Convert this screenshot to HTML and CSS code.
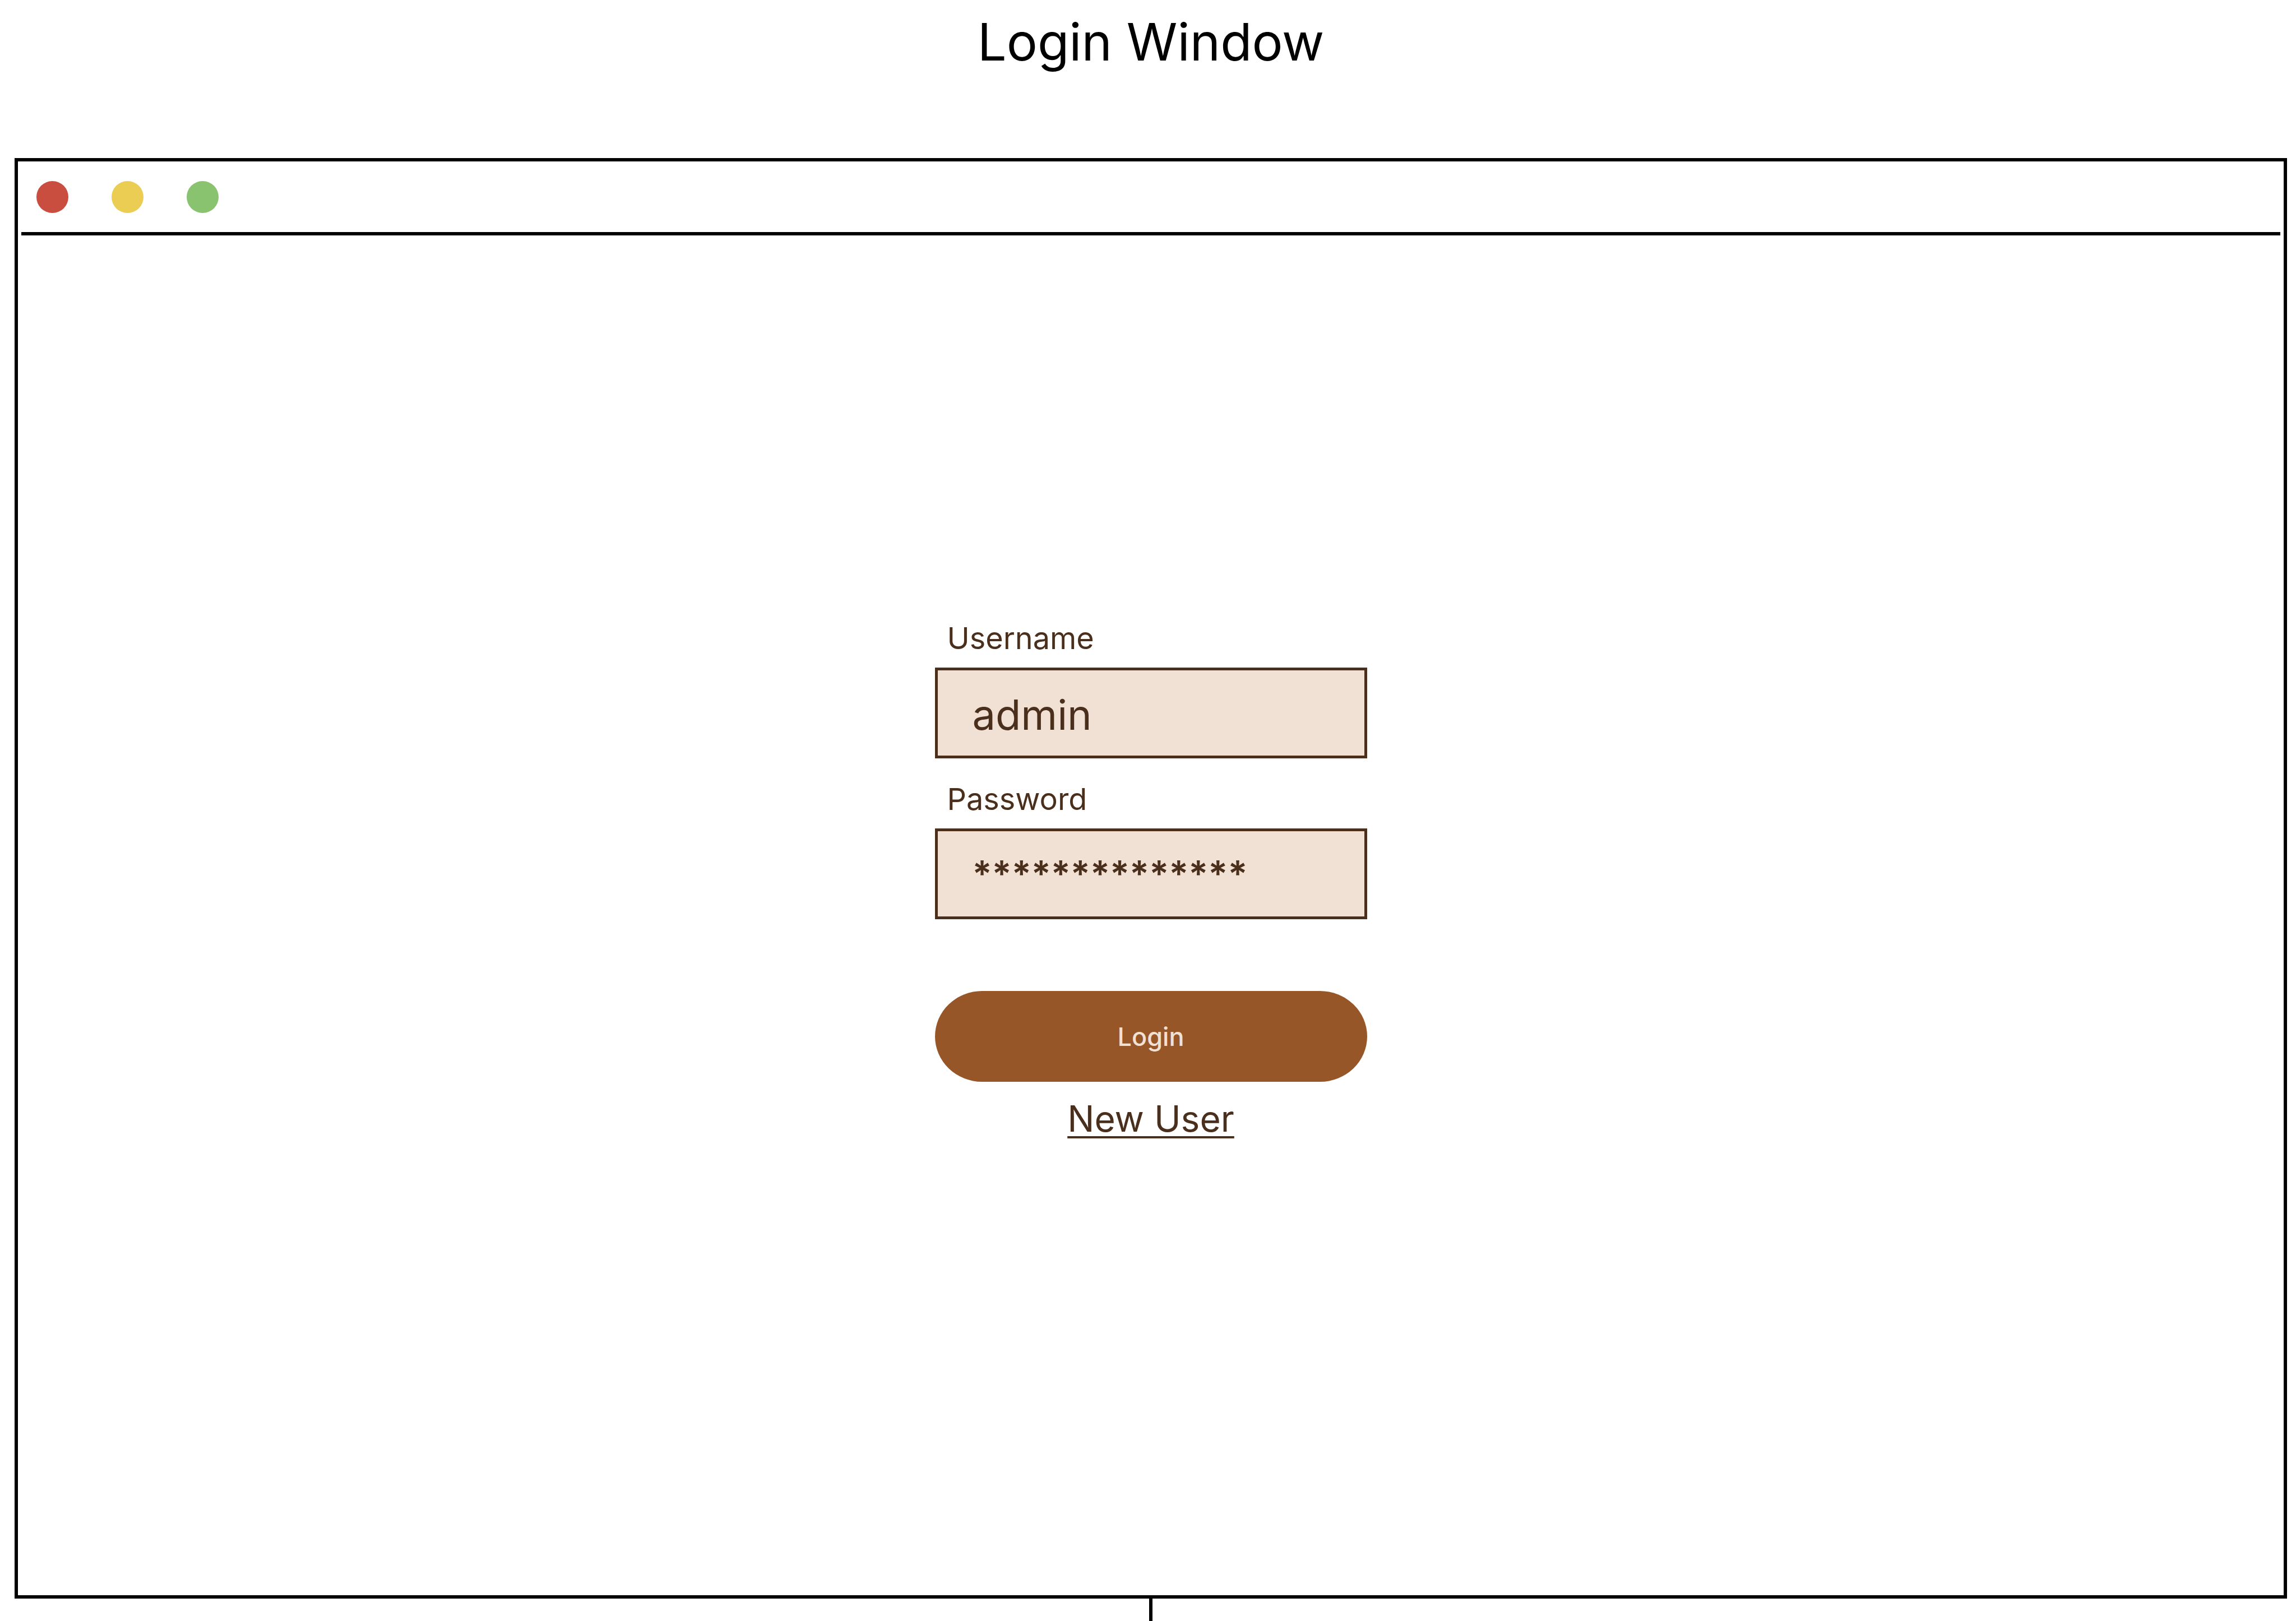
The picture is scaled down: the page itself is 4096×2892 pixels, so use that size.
FILE: index.html
```html
<!DOCTYPE html>
<html lang="en">
<head>
<meta charset="utf-8">
<title>Login Window</title>
<link rel="stylesheet" href="styles.css">
</head>
<body>
<h1 class="title">Login Window</h1>
<main class="window">
  <div class="titlebar">
    <span class="dot dot-close"></span>
    <span class="dot dot-minimize"></span>
    <span class="dot dot-zoom"></span>
  </div>
  <form class="login">
    <label class="label" for="username">Username</label>
    <input class="field" id="username" type="text" value="admin">
    <label class="label" for="password">Password</label>
    <input class="field field-masked" id="password" type="text" value="**************">
    <button class="submit" type="button">Login</button>
    <a class="new-user" href="#">New User</a>
  </form>
</main>
<div class="connector"></div>
</body>
</html>
```

FILE: styles.css
```css
* {
  box-sizing: border-box;
}

body {
  margin: 0;
  padding: 0 16px 0 26px;
  min-height: 100vh;
  display: flex;
  flex-direction: column;
  background: #fff;
  color: #4a2f1d;
  font-family: Inter, "Liberation Sans", sans-serif;
}

.title {
  margin: 0 0 132px;
  color: #000;
  font-size: 92px;
  font-weight: 400;
  line-height: 150px;
  text-align: center;
}

.window {
  flex: 1;
  display: flex;
  flex-direction: column;
  border: 6px solid #000;
}

.titlebar {
  display: flex;
  gap: 77px;
  margin: 0 6px;
  padding: 35px 27px 34px;
  border-bottom: 6px solid #000;
}

.dot {
  width: 57px;
  height: 57px;
  border-radius: 50%;
}

.dot-close {
  background: #ca4e3f;
}

.dot-minimize {
  background: #ebcd54;
}

.dot-zoom {
  background: #89c36f;
}

.login {
  display: flex;
  flex-direction: column;
  width: 771px;
  max-width: 100%;
  margin: 0 auto;
  padding: 646px 0 64px;
}

.label {
  margin: 36px 0 16px;
  padding-left: 22px;
  font-size: 54px;
  line-height: 73px;
}

.field {
  height: 162px;
  margin: 0;
  padding: 6px 62px 0;
  border: 5px solid #4a2f1d;
  border-radius: 0;
  background: #f1e1d4;
  color: inherit;
  font: 400 74px Inter, "Liberation Sans", sans-serif;
  outline: 0;
}

.field-masked {
  padding-top: 0;
  padding-bottom: 2px;
  font-size: 65px;
  font-weight: 600;
}

.submit {
  height: 162px;
  margin: 128px 0 0;
  padding: 0;
  border: 0;
  border-radius: 84px / 81px;
  background: #965628;
  color: #f1e1d4;
  font: 500 45px Inter, "Liberation Sans", sans-serif;
}

.new-user {
  align-self: center;
  margin-top: 26px;
  color: inherit;
  font-size: 64px;
  line-height: 80px;
  text-decoration: underline;
  text-decoration-thickness: 4px;
  text-underline-offset: 8px;
}

.connector {
  align-self: center;
  width: 6px;
  height: 40px;
  background: #000;
}
```
